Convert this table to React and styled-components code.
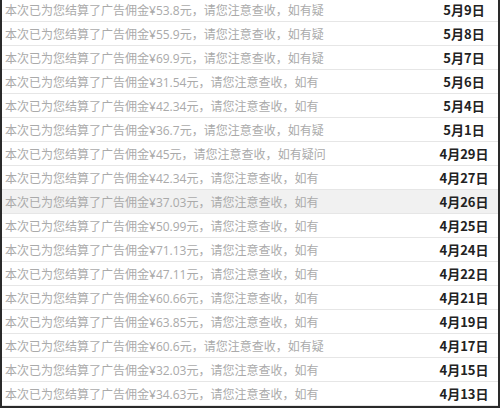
import React from "react";
import styled, { createGlobalStyle } from "styled-components";

const GlobalStyle = createGlobalStyle`
  html, body {
    margin: 0;
    padding: 0;
    background: #fff;
  }
`;

// outer frame, top edge is cut off in the screenshot
const Frame = styled.div`
  width: 500px;
  height: 408px;
  box-sizing: border-box;
  border: 2px solid #2a2a2a;
  border-top: none;
  overflow: hidden;
  font-family: "Open Sans", "Noto Sans CJK SC", sans-serif;
`;

const List = styled.div`
  display: flex;
  flex-direction: column;
  margin-top: -2px;
`;

const Row = styled.div`
  display: grid;
  grid-template-columns: 428px 1fr;
  align-items: center;
  height: 24px;
  box-sizing: border-box;
  border-bottom: 1px solid #e6e6e6;
  background: ${({ active }) => (active ? "#f1f1f1" : "#fff")};
`;

const Message = styled.div`
  padding-left: 3px;
  font-size: 12px;
  color: #aaaaaa;
  white-space: nowrap;
  overflow: hidden;
`;

const Day = styled.div`
  text-align: center;
  font-family: "Noto Sans CJK SC", sans-serif;
  font-size: 13px;
  font-weight: 700;
  color: #222;
`;

const rows = [
  ["53.8", "如有疑", "5月9日"],
  ["55.9", "如有疑", "5月8日"],
  ["69.9", "如有疑", "5月7日"],
  ["31.54", "如有", "5月6日"],
  ["42.34", "如有", "5月4日"],
  ["36.7", "如有疑", "5月1日"],
  ["45", "如有疑问", "4月29日"],
  ["42.34", "如有", "4月27日"],
  ["37.03", "如有", "4月26日"],
  ["50.99", "如有", "4月25日"],
  ["71.13", "如有", "4月24日"],
  ["47.11", "如有", "4月22日"],
  ["60.66", "如有", "4月21日"],
  ["63.85", "如有", "4月19日"],
  ["60.6", "如有疑", "4月17日"],
  ["32.03", "如有", "4月15日"],
  ["34.63", "如有", "4月13日"],
];

export default function App() {
  return (
    <>
      <GlobalStyle />
      <Frame>
        <List>
          {rows.map(([amount, tail, day], i) => (
            <Row key={day} active={i === 8}>
              <Message>
                本次已为您结算了广告佣金¥{amount}元，请您注意查收，{tail}
              </Message>
              <Day>{day}</Day>
            </Row>
          ))}
        </List>
      </Frame>
    </>
  );
}
